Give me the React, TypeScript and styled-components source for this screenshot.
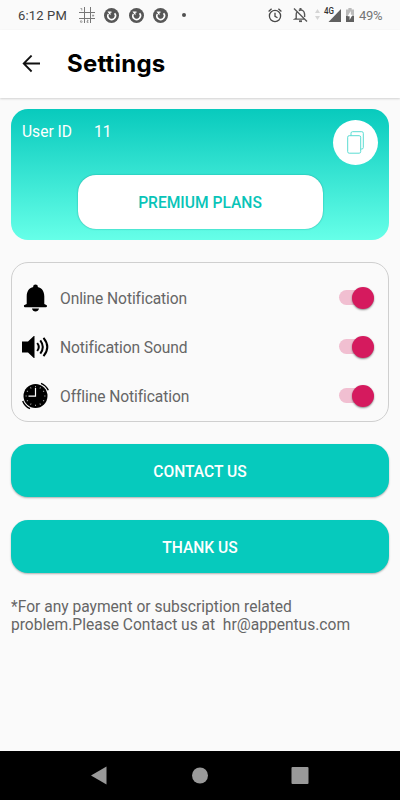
import React from 'react';
import styled, { createGlobalStyle } from 'styled-components';

const GlobalStyle = createGlobalStyle`
  * { box-sizing: border-box; }
  body { margin: 0; background: #fafafa; font-family: Roboto, sans-serif; }
  svg { display: block; flex: none; }
  button { border: 0; padding: 0; font-family: inherit; }
`;

const Screen = styled.div`
  width: 400px;
  height: 800px;
  display: flex;
  flex-direction: column;
  background: #fafafa;
  overflow: hidden;
`;

const StatusBar = styled.div`
  height: 30px;
  flex: none;
  display: flex;
  align-items: center;
  justify-content: space-between;
  padding: 0 18px 0;
`;

const StatusGroup = styled.div`
  display: flex;
  align-items: center;
`;

const StatusText = styled.span<{ $color: string; $width: number; $spacing: number }>`
  display: block;
  font-size: 13px;
  line-height: 16px;
  padding-top: 1px;
  width: ${(p) => p.$width}px;
  letter-spacing: ${(p) => p.$spacing}px;
  color: ${(p) => p.$color};
  white-space: nowrap;
`;

const Slot = styled.span<{ $gap: number }>`
  display: block;
  margin-left: ${(p) => p.$gap}px;
`;

const Header = styled.header`
  height: 68px;
  flex: none;
  display: flex;
  align-items: center;
  padding: 0 0 1px 22px;
  background: #fff;
  box-shadow: 0 1px 2px rgba(0, 0, 0, 0.16);
`;

const Title = styled.h1`
  margin: 1px 0 0 26px;
  font: 700 24px/32px Inter, sans-serif;
  letter-spacing: 0.2px;
  color: #000;
`;

const Content = styled.main`
  flex: 1;
  padding: 11px 11px 0;
`;

const UserCard = styled.section`
  height: 131px;
  display: flex;
  flex-direction: column;
  padding: 11px 11px;
  border-radius: 17px;
  background: linear-gradient(#08cabd, #66ffe8);
`;

const UserRow = styled.div`
  display: flex;
  height: 55px;
  font-size: 15.6px;
  line-height: 24px;
  color: #fff;
`;

const UserLabel = styled.span`
  width: 72px;
`;

const CopyButton = styled.button`
  width: 45px;
  height: 45px;
  margin-left: auto;
  border-radius: 50%;
  display: grid;
  place-items: center;
  background: #fff;
`;

const PremiumButton = styled.button`
  width: 245px;
  height: 54px;
  padding-top: 2px;
  align-self: center;
  border-radius: 18px;
  background: #fff;
  color: #08c4b8;
  font-size: 15.6px;
  font-weight: 500;
  box-shadow: 0 0 1.5px rgba(0, 140, 130, 0.9);
`;

const Panel = styled.section`
  height: 160px;
  margin-top: 22px;
  padding: 10px 13px 11px 10px;
  border: 1px solid #cfcfcf;
  border-radius: 17px;
`;

const SettingRow = styled.div`
  height: 49px;
  display: flex;
  align-items: center;
`;

const SettingLabel = styled.span`
  margin-left: 11px;
  padding-top: 2px;
  font-size: 15.6px;
  font-weight: 400;
  letter-spacing: -0.09px;
  color: #666;
`;

const Track = styled.span`
  width: 34px;
  height: 15px;
  margin: 0 2px 0 auto;
  border-radius: 8px;
  background: #f1bfd1;
  display: flex;
  align-items: center;
  justify-content: flex-end;
`;

const Thumb = styled.span`
  flex: none;
  width: 22px;
  height: 22px;
  margin-right: -1px;
  border-radius: 50%;
  background: #d51a5e;
  box-shadow: 0 1px 2px rgba(0, 0, 0, 0.45);
`;

const ActionButton = styled.button`
  display: block;
  width: 100%;
  height: 53px;
  padding-top: 2px;
  margin-top: 22px;
  border-radius: 17px;
  background: #06cabd;
  color: #fff;
  font-size: 15.6px;
  font-weight: 500;
  box-shadow: 0 1px 2px rgba(0, 0, 0, 0.3);

  & + & {
    margin-top: 23px;
  }
`;

const Note = styled.p`
  margin: 25px 0 0;
  font-size: 15.6px;
  line-height: 18.3px;
  letter-spacing: -0.01px;
  color: #666;
  white-space: pre;
`;

const NavBar = styled.nav`
  height: 49px;
  flex: none;
  display: flex;
  align-items: center;
  justify-content: center;
  gap: 76px;
  background: #000;
`;

const GridIcon = () => (
  <svg width="17" height="17" viewBox="0 0 17 17" stroke="#777" fill="none">
    <path d="M5.5 0v16M11.5 0v16M0 5.5h16M0 11.5h16" />
    <path d="M1.5 1.5h1.3v2M14 7.5v2.2M13.2 8.6h2M2.5 13l-1 1.2v1h1.6v-1M8 13.2h1v1H8v1.2h1.5" strokeWidth=".7" />
  </svg>
);

const RefreshIcon = () => (
  <svg width="15" height="15" viewBox="0 0 15 15" fill="none">
    <circle cx="7.5" cy="7.5" r="7.5" fill="#575757" />
    <path d="M4.300 6A3.800 3.800 0 1 0 10.600 5.300" stroke="#fff" strokeWidth="1.600" />
    <path d="M3.500 3.500h4v1.300H6.500v2.400L5.200 6z" fill="#fff" />
  </svg>
);

const AlarmIcon = () => (
  <svg width="14" height="15" viewBox="0 0 14 15" fill="none" stroke="#484848" strokeWidth="1.3">
    <circle cx="7" cy="8" r="5.6" />
    <path d="M7 4.7v3.6l2.5 1.5M.6 3.4l3-2.6M13.4 3.4l-3-2.6" />
  </svg>
);

const MutedBellIcon = () => (
  <svg width="15" height="16" viewBox="0 0 15 16" fill="none" stroke="#575757" strokeWidth="1.4">
    <path d="M1 1.6l13 13M3.7 5.2C3.3 6 3.2 7 3.2 8v3.4L2 12.1h9.6M5.8 3.5c3-1.5 5.6.4 5.8 3.6v3" />
    <path d="M7.5 1v2" strokeWidth="2" />
    <path d="M6 14.2h3" strokeWidth="1.8" />
  </svg>
);

const SignalIcon = () => (
  <svg width="26" height="16" viewBox="0 0 26 16" overflow="visible">
    <path d="M0 6l2.5-4L5 6zM0 9h5l-2.5 4z" fill="#d5d5d5" />
    <path d="M26 2v13H13.500z" fill="#606060" />
    <text x="9" y="7" fontFamily="Roboto" fontWeight="500" fontSize="8.800" fill="#333" stroke="#fafafa" strokeWidth="1" paintOrder="stroke" textLength="10" lengthAdjust="spacingAndGlyphs">4G</text>
  </svg>
);

const BatteryIcon = () => (
  <svg width="8" height="14" viewBox="0 0 8 14">
    <path d="M2.4 0h3.200v1.400H8V14H0V1.400h2.400z" fill="#bbb" />
    <path d="M0 8h8v6H0z" fill="#606060" />
    <path d="M4.8 3L1.600 8.300h2V12l3-5.300H4.800z" fill="#fff" />
  </svg>
);

const BackIcon = () => (
  <svg width="19" height="18" viewBox="0 0 19 18" fill="none" stroke="#111" strokeWidth="1.8">
    <path d="M18 8.500H2M9.600 .500L1.700 8.500l7.900 8" />
  </svg>
);

const CopyIcon = () => (
  <svg width="17" height="23" viewBox="0 0 17 23" fill="#fff" stroke="#5bdcd2">
    <rect x="4" y=".7" width="12.300" height="17.300" rx="1.500" />
    <rect x=".7" y="4.700" width="13" height="17.500" rx="1.500" />
  </svg>
);

const BellIcon = () => (
  <svg width="27" height="28" viewBox="0 0 27 28">
    <circle cx="13.500" cy="2.900" r="2.400" />
    <path d="M4.700 20V12.500C4.700 6.500 8 2.800 13.500 2.800s8.800 3.700 8.800 9.700V20l2.500 1.300q.6 2-1 2H3q-1.400 0-1-2zM10 24.500h7c-.5 4-6.500 4-7 0z" />
  </svg>
);

const SpeakerIcon = () => (
  <svg width="27" height="24" viewBox="0 0 27 24">
    <path d="M0 6.500h6L11.800 1h.7v22h-.7L6 17.500H0z" />
    <path d="M15.200 8q3.200 4 0 8M18.300 5.300q5 6.700 0 13.400M21.500 2.800q7.600 9.200 0 18.400" fill="none" stroke="#000" strokeWidth="2" />
  </svg>
);

const TICKS = [0, 30, 60, 90, 120, 150, 180, 210, 240, 270, 300, 330];

const ClockIcon = () => (
  <svg width="27" height="28" viewBox="0 0 27 28" fill="none">
    <circle cx="13.500" cy="14" r="12" fill="#000" />
    {TICKS.map((angle) => (
      <path key={angle} d="M13.500 4v1.300" stroke="#aaa" strokeWidth=".9" transform={`rotate(${angle} 13.500 14)`} />
    ))}
    <path d="M13.500 6v8.200H6.500" stroke="#fff" strokeWidth="1.200" />
    <path d="M19 1.300q5 2 7.300 7M.7 19q2 5.300 7.300 7.700" stroke="#000" strokeWidth="1.400" />
  </svg>
);

const SETTINGS = [
  { label: 'Online Notification', Icon: BellIcon },
  { label: 'Notification Sound', Icon: SpeakerIcon },
  { label: 'Offline Notification', Icon: ClockIcon },
];

export default function App() {
  return (
    <>
      <GlobalStyle />
      <Screen>
        <StatusBar>
          <StatusGroup>
            <StatusText $color="#424242" $width={49} $spacing={0.15}>6:12 PM</StatusText>
            <Slot $gap={12}><GridIcon /></Slot>
            <Slot $gap={8}><RefreshIcon /></Slot>
            <Slot $gap={9.500}><RefreshIcon /></Slot>
            <Slot $gap={9.500}><RefreshIcon /></Slot>
            <Slot $gap={13.500}>
              <svg width="4" height="4"><circle cx="2" cy="2" r="2" fill="#505050" /></svg>
            </Slot>
          </StatusGroup>
          <StatusGroup>
            <AlarmIcon />
            <Slot $gap={11}><MutedBellIcon /></Slot>
            <Slot $gap={7}><SignalIcon /></Slot>
            <Slot $gap={5}><BatteryIcon /></Slot>
            <Slot $gap={5}><StatusText $color="#757575" $width={23} $spacing={-0.3}>49%</StatusText></Slot>
          </StatusGroup>
        </StatusBar>
        <Header>
          <BackIcon />
          <Title>Settings</Title>
        </Header>
        <Content>
          <UserCard>
            <UserRow>
              <UserLabel>User ID</UserLabel>
              <span>11</span>
              <CopyButton aria-label="Copy user ID"><CopyIcon /></CopyButton>
            </UserRow>
            <PremiumButton>PREMIUM PLANS</PremiumButton>
          </UserCard>
          <Panel>
            {SETTINGS.map(({ label, Icon }) => (
              <SettingRow key={label}>
                <Icon />
                <SettingLabel>{label}</SettingLabel>
                <Track><Thumb /></Track>
              </SettingRow>
            ))}
          </Panel>
          <ActionButton>CONTACT US</ActionButton>
          <ActionButton>THANK US</ActionButton>
          <Note>{'*For any payment or subscription related\nproblem.Please Contact us at  hr@appentus.com'}</Note>
        </Content>
        <NavBar>
          <svg width="24" height="20" viewBox="0 0 24 20" fill="#999"><path d="M3 9.500L18.500 .500v18z" /></svg>
          <svg width="24" height="20" viewBox="0 0 24 20" fill="#999"><circle cx="12" cy="9.500" r="8" /></svg>
          <svg width="24" height="20" viewBox="0 0 24 20" fill="#999"><rect x="3.500" y="1" width="17" height="17" rx="1" /></svg>
        </NavBar>
      </Screen>
    </>
  );
}
